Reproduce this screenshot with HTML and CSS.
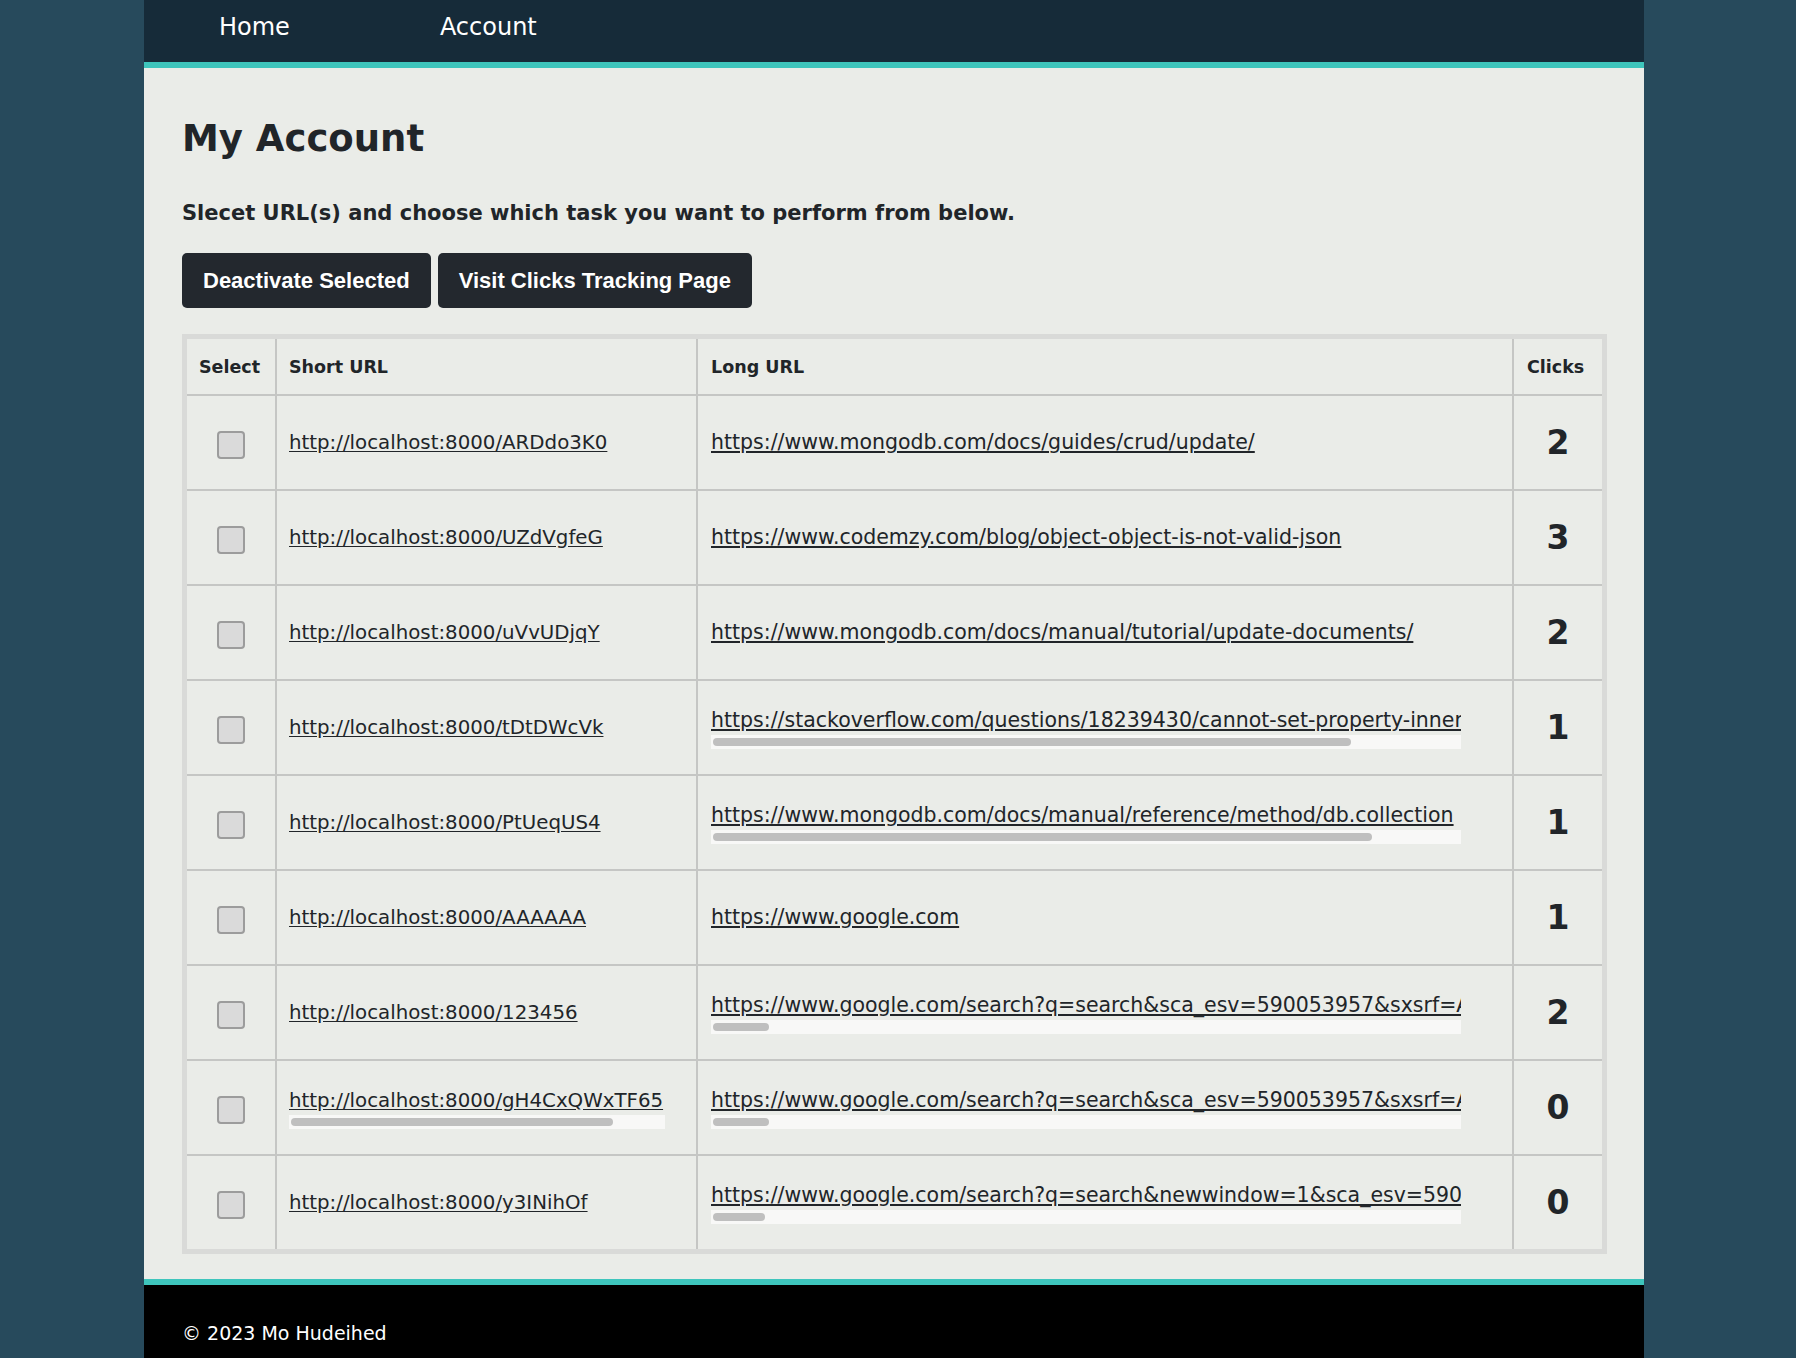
FILE: index.html
```html
<!DOCTYPE html>
<html lang="en">
<head>
<meta charset="utf-8">
<title>My Account</title>
<link rel="stylesheet" href="styles.css">
</head>
<body>
<div class="page">
  <nav class="nav">
    <a class="nav-link" href="#">Home</a>
    <a class="nav-link" href="#">Account</a>
  </nav>
  <main class="main">
    <h1 class="title">My Account</h1>
    <p class="subtitle">Slecet URL(s) and choose which task you want to perform from below.</p>
    <div class="actions">
      <button class="btn" type="button">Deactivate Selected</button>
      <button class="btn" type="button">Visit Clicks Tracking Page</button>
    </div>
    <table class="urls">
      <thead>
        <tr>
          <th class="col-sel">Select</th>
          <th class="col-short">Short URL</th>
          <th class="col-long">Long URL</th>
          <th class="col-clicks">Clicks</th>
        </tr>
      </thead>
      <tbody>
        <tr>
          <td class="sel"><input class="check" type="checkbox"></td>
          <td><div class="cell-url short"><a href="#">http://localhost:8000/ARDdo3K0</a></div></td>
          <td><div class="cell-url long"><a href="#">https://www.mongodb.com/docs/guides/crud/update/</a></div></td>
          <td class="clicks">2</td>
        </tr>
        <tr>
          <td class="sel"><input class="check" type="checkbox"></td>
          <td><div class="cell-url short"><a href="#">http://localhost:8000/UZdVgfeG</a></div></td>
          <td><div class="cell-url long"><a href="#">https://www.codemzy.com/blog/object-object-is-not-valid-json</a></div></td>
          <td class="clicks">3</td>
        </tr>
        <tr>
          <td class="sel"><input class="check" type="checkbox"></td>
          <td><div class="cell-url short"><a href="#">http://localhost:8000/uVvUDjqY</a></div></td>
          <td><div class="cell-url long"><a href="#">https://www.mongodb.com/docs/manual/tutorial/update-documents/</a></div></td>
          <td class="clicks">2</td>
        </tr>
        <tr>
          <td class="sel"><input class="check" type="checkbox"></td>
          <td><div class="cell-url short"><a href="#">http://localhost:8000/tDtDWcVk</a></div></td>
          <td><div class="cell-url long"><a href="#">https://stackoverflow.com/questions/18239430/cannot-set-property-inner</a><div class="track"><div class="thumb" style="width:638px"></div></div></div></td>
          <td class="clicks">1</td>
        </tr>
        <tr>
          <td class="sel"><input class="check" type="checkbox"></td>
          <td><div class="cell-url short"><a href="#">http://localhost:8000/PtUeqUS4</a></div></td>
          <td><div class="cell-url long"><a href="#">https://www.mongodb.com/docs/manual/reference/method/db.collection</a><div class="track"><div class="thumb" style="width:659px"></div></div></div></td>
          <td class="clicks">1</td>
        </tr>
        <tr>
          <td class="sel"><input class="check" type="checkbox"></td>
          <td><div class="cell-url short"><a href="#">http://localhost:8000/AAAAAA</a></div></td>
          <td><div class="cell-url long"><a href="#">https://www.google.com</a></div></td>
          <td class="clicks">1</td>
        </tr>
        <tr>
          <td class="sel"><input class="check" type="checkbox"></td>
          <td><div class="cell-url short"><a href="#">http://localhost:8000/123456</a></div></td>
          <td><div class="cell-url long"><a href="#">https://www.google.com/search?q=search&amp;sca_esv=590053957&amp;sxsrf=A</a><div class="track"><div class="thumb" style="width:56px"></div></div></div></td>
          <td class="clicks">2</td>
        </tr>
        <tr>
          <td class="sel"><input class="check" type="checkbox"></td>
          <td><div class="cell-url short"><a href="#">http://localhost:8000/gH4CxQWxTF65</a><div class="track"><div class="thumb" style="width:322px"></div></div></div></td>
          <td><div class="cell-url long"><a href="#">https://www.google.com/search?q=search&amp;sca_esv=590053957&amp;sxsrf=A</a><div class="track"><div class="thumb" style="width:56px"></div></div></div></td>
          <td class="clicks">0</td>
        </tr>
        <tr>
          <td class="sel"><input class="check" type="checkbox"></td>
          <td><div class="cell-url short"><a href="#">http://localhost:8000/y3INihOf</a></div></td>
          <td><div class="cell-url long"><a href="#">https://www.google.com/search?q=search&amp;newwindow=1&amp;sca_esv=5900</a><div class="track"><div class="thumb" style="width:52px"></div></div></div></td>
          <td class="clicks">0</td>
        </tr>
      </tbody>
    </table>
  </main>
  <footer class="footer">© 2023 Mo Hudeihed</footer>
</div>
</body>
</html>
```
FILE: styles.css
```css
* { box-sizing: border-box; }

html, body {
  margin: 0;
  padding: 0;
}

body {
  background: #274a5c;
  font-family: "DejaVu Sans", "Noto Sans", sans-serif;
  color: #212529;
  display: flex;
  justify-content: center;
  padding-right: 8px;
}

.page {
  width: 1500px;
  background: #eaece8;
}

/* ---------- nav ---------- */
.nav {
  display: flex;
  align-items: flex-start;
  height: 68px;
  background: #162b39;
  border-bottom: 6px solid #3ec5bc;
}

.nav-link {
  color: #ffffff;
  text-decoration: none;
  font-size: 24px;
  line-height: 54px;
  padding: 0 75px;
}

/* ---------- main ---------- */
.main {
  padding: 49px 38px 25px;
}

.title {
  margin: 0;
  font-size: 37px;
  line-height: 44px;
  font-weight: 700;
}

.subtitle {
  margin: 39px 0 0;
  font-size: 21px;
  line-height: 26px;
  font-weight: 700;
}

.actions {
  display: flex;
  gap: 7px;
  margin-top: 27px;
}

.btn {
  font-family: "Liberation Sans", Arial, sans-serif;
  font-weight: 700;
  font-size: 22px;
  line-height: 25px;
  padding: 15px 21px;
  color: #ffffff;
  background: #23282e;
  border: 0;
  border-radius: 5px;
}

/* ---------- table ---------- */
.urls {
  margin-top: 26px;
  width: 1425px;
  table-layout: fixed;
  border-collapse: separate;
  border-spacing: 0;
  border: 5px solid #d9dad8;
}

.urls th,
.urls td {
  border-right: 2px solid #c5c6c4;
  border-bottom: 2px solid #c5c6c4;
  padding: 0 12px;
  vertical-align: middle;
  text-align: left;
}

.urls th:last-child,
.urls td:last-child {
  border-right: 0;
}

.urls tbody tr:last-child td {
  border-bottom: 0;
}

.urls th {
  height: 57px;
  font-size: 17.5px;
  font-weight: 700;
}

.urls td {
  height: 95px;
}

.urls tbody tr:last-child td {
  height: 93px;
}

.col-sel { width: 90px; }
.col-short { width: 421px; }
.col-long { width: 816px; }
.col-clicks { width: 88px; }

.urls th.col-long,
.urls th.col-clicks { padding-left: 13px; }

.urls td.sel {
  text-align: center;
  padding: 0;
}

.check {
  appearance: none;
  -webkit-appearance: none;
  display: block;
  margin: 4px auto 0;
  width: 28px;
  height: 28px;
  background: #dadada;
  border: 2px solid #9c9c9c;
  border-radius: 4px;
}

.cell-url {
  overflow: hidden;
  white-space: nowrap;
  font-size: 20.5px;
  line-height: 27px;
}

.cell-url.short {
  width: 376px;
  font-size: 19.8px;
}

.cell-url.long {
  width: 750px;
  margin-left: 1px;
}

.cell-url a {
  color: #212529;
  text-decoration: underline;
  text-underline-offset: 2px;
}

.track {
  height: 14px;
  margin-top: 1px;
  background: #f8f8f7;
  padding: 3px 2px;
}

.thumb {
  height: 8px;
  background: #bfbfbf;
  border-radius: 4px;
}

.urls td.clicks {
  text-align: center;
  padding: 0;
  font-size: 33px;
  font-weight: 700;
}

/* ---------- footer ---------- */
.footer {
  background: #000000;
  border-top: 6px solid #3ec5bc;
  color: #ffffff;
  font-size: 19px;
  line-height: 24px;
  padding: 36px 38px 13px;
}
```
